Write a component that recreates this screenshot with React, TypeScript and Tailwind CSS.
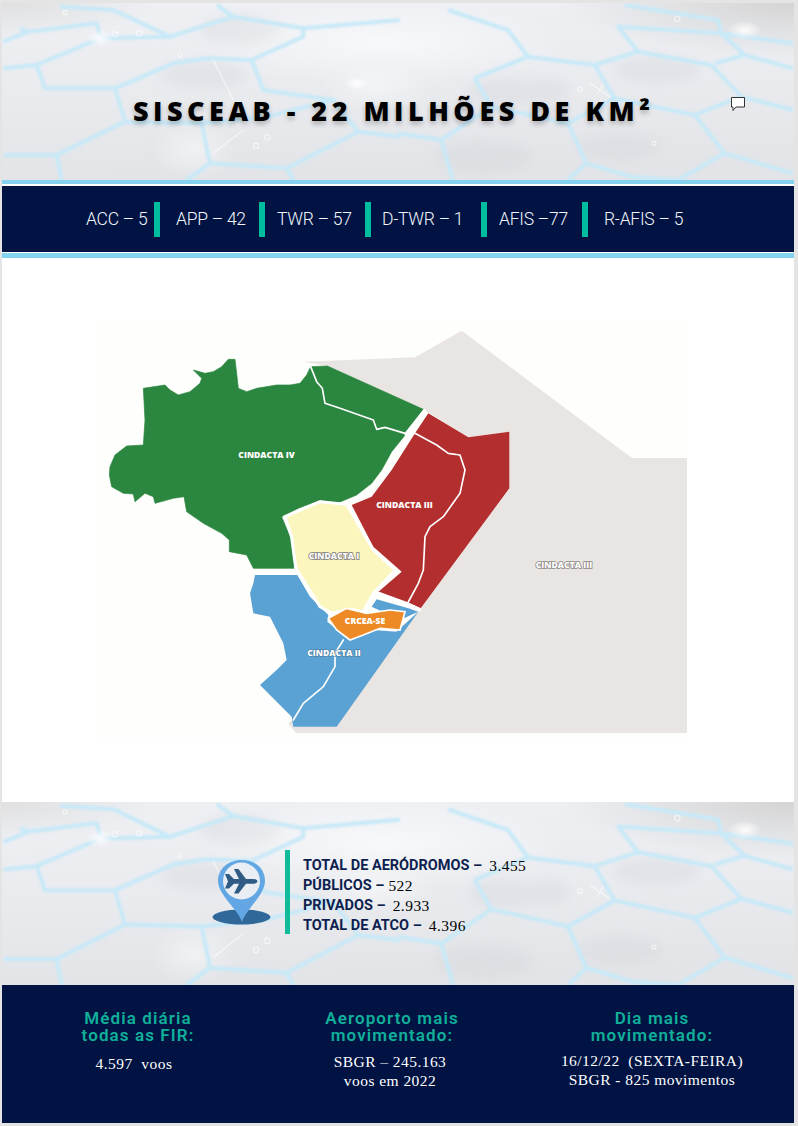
import React from "react";

const leftLines = [
  "10,125 85,95 290,70 300,110",
  "60,85 85,95",
  "10,205 110,195 135,265 345,265 375,365 170,465 10,465",
  "110,195 300,115 510,110 700,50 650,15",
  "170,465 185,540",
  "345,265 520,190 620,175 755,180 790,270 1000,300 1050,365 1075,395 860,505 880,540",
  "755,180 910,110 910,85 700,50",
  "375,365 605,370 630,490 560,540",
  "605,370 800,350 1000,300",
  "630,490 860,505",
  "1075,395 1200,410",
  "180,20 340,30 510,110",
  "910,85 1200,60",
];
const rightLines = [
  "230,235 280,320 130,420 0,400",
  "130,420 165,540",
  "280,320 510,370 565,490 510,540",
  "565,490 700,530 840,540",
  "510,370 650,295 590,195 390,170 230,235",
  "590,195 720,155 940,195 1030,290 890,345 980,460 840,540",
  "980,460 1185,520",
  "890,345 650,295",
  "1030,290 1185,330",
  "950,190 1040,165 1185,205",
  "1040,165 970,100 1185,130",
  "720,155 660,80 970,100",
  "680,15 960,60 970,100",
  "390,170 330,90 150,30",
];

function Backdrop() {
  return (
    <svg className="absolute inset-0 w-full h-full" viewBox="6 9 2376 531" preserveAspectRatio="none">
      <defs>
        <linearGradient id="bgg" x1="0" y1="0" x2="0.1" y2="1">
          <stop offset="0" stopColor="#eef0f4" />
          <stop offset="0.5" stopColor="#e9ebef" />
          <stop offset="1" stopColor="#e2e4e7" />
        </linearGradient>
        <radialGradient id="corner" cx="1" cy="0" r="0.3">
          <stop offset="0" stopColor="#d4d4d4" stopOpacity="1" />
          <stop offset="1" stopColor="#d4d4d4" stopOpacity="0" />
        </radialGradient>
        <radialGradient id="cornerL" cx="0" cy="0" r="0.2">
          <stop offset="0" stopColor="#dedede" stopOpacity="0.9" />
          <stop offset="1" stopColor="#dedede" stopOpacity="0" />
        </radialGradient>
        <radialGradient id="glow" cx="0.5" cy="0.5" r="0.5">
          <stop offset="0" stopColor="#ffffff" stopOpacity="0.9" />
          <stop offset="1" stopColor="#ffffff" stopOpacity="0" />
        </radialGradient>
        <filter id="b1"><feGaussianBlur stdDeviation="2.5" /></filter>
        <filter id="b2"><feGaussianBlur stdDeviation="16" /></filter>
      </defs>
      <rect x="6" y="9" width="2376" height="531" fill="url(#bgg)" />
      <rect x="6" y="9" width="2376" height="531" fill="url(#corner)" />
      <rect x="6" y="9" width="2376" height="531" fill="url(#cornerL)" />
      <g fill="#d4d7db" opacity="0.4" filter="url(#b2)">
        <ellipse cx="610" cy="225" rx="130" ry="40" />
        <ellipse cx="720" cy="90" rx="120" ry="45" />
        <ellipse cx="1510" cy="275" rx="110" ry="40" />
        <ellipse cx="1640" cy="270" rx="70" ry="35" />
        <ellipse cx="1970" cy="210" rx="130" ry="40" />
        <ellipse cx="1860" cy="440" rx="130" ry="40" />
        <ellipse cx="1450" cy="470" rx="150" ry="50" />
      </g>
      <ellipse cx="1150" cy="130" rx="560" ry="130" fill="url(#glow)" opacity="0.7" />
      <ellipse cx="580" cy="450" rx="130" ry="90" fill="url(#glow)" opacity="0.5" />
      <ellipse cx="1130" cy="260" rx="170" ry="70" fill="url(#glow)" opacity="0.5" />
      <g fill="none" stroke="#c8e9f8" strokeWidth="12" strokeLinejoin="round" filter="url(#b1)">
        {leftLines.map((p, i) => (
          <polyline key={i} points={p} />
        ))}
        <g transform="translate(1194 0)">
          {rightLines.map((p, i) => (
            <polyline key={i} points={p} />
          ))}
        </g>
      </g>
      <ellipse cx="300" cy="115" rx="40" ry="26" fill="url(#glow)" />
      <ellipse cx="2235" cy="90" rx="50" ry="28" fill="url(#glow)" />
      <ellipse cx="1070" cy="250" rx="36" ry="20" fill="url(#glow)" />
      <g fill="none" stroke="#ffffff" strokeWidth="3.5" opacity="0.6">
        <circle cx="195" cy="38" r="6" />
        <circle cx="345" cy="103" r="8" />
        <circle cx="418" cy="100" r="8" />
        <circle cx="540" cy="165" r="6" />
        <circle cx="802" cy="412" r="8" />
        <circle cx="768" cy="438" r="8" />
        <circle cx="2032" cy="56" r="8" />
        <circle cx="1740" cy="268" r="7" />
        <circle cx="1962" cy="430" r="6" />
        <path d="M640 180 L700 300 M640 460 L730 390 M1770 250 L1830 290 M1810 255 L1790 285" />
      </g>
    </svg>
  );
}

function MapSvg() {
  return (
    <svg width="600" height="420" viewBox="90 320 600 420" className="block">
      <rect x="96" y="322" width="592" height="416" fill="#fefefc" />
      <g transform="translate(90 320) scale(0.33333)">
        <path
          d="M642,125 L975,112 L1115,32 L1626,414 L1791,414 L1791,1239 L618,1239 L595,1210 L985,875 L1258,505 L1258,335 L1135,352 L1000,268 L712,138 Z"
          fill="#e9e5e2"
        />
        <path
          d="M662,140 L712,138 L1000,268 L975,305 L948,342 L905,395 L875,450 L845,490 L800,525 L745,548 L690,540 L625,565 L575,590 L600,650 L612,745 L490,745 L470,705 L418,695 L418,660 L395,640 L340,610 L290,575 L282,530 L250,535 L195,550 L190,530 L165,520 L135,545 L130,522 L100,520 L65,500 L58,465 L60,440 L75,405 L110,378 L160,375 L165,300 L160,205 L225,195 L240,210 L265,225 L300,215 L330,190 L335,175 L310,150 L345,160 L370,155 L395,140 L415,118 L435,118 L440,160 L445,205 L470,215 L500,205 L560,195 L600,195 L630,190 L650,165 Z"
          fill="#2b8740"
          stroke="#2b8740"
          strokeWidth="2"
          strokeLinejoin="round"
        />
        <path
          d="M1015,280 L1135,352 L1258,335 L1258,505 L990,868 L950,850 L862,818 L935,755 L850,680 L785,555 L845,530 L905,450 L975,340 Z"
          fill="#b32f2f"
        />
        <path
          d="M495,765 L622,765 L660,830 L715,885 L712,905 L780,960 L850,930 L920,935 L985,875 L740,1220 L610,1220 L605,1190 L510,1095 L560,1050 L590,1020 L580,970 L560,930 L540,890 L490,880 L485,850 L480,820 L490,790 Z"
          fill="#5aa2d3"
        />
        <path d="M845,860 L860,838 L955,865 L985,875 L930,900 Z" fill="#5aa2d3" />
        <path
          d="M585,590 L690,545 L770,553 L850,690 L915,750 L850,820 L820,875 L780,868 L725,880 L690,860 L640,780 L618,745 L605,650 Z"
          fill="#faf6bd"
          stroke="#ffffff"
          strokeWidth="9"
        />
        <path
          d="M715,895 L770,865 L830,880 L900,870 L945,875 L930,930 L870,925 L820,945 L780,960 L740,930 Z"
          fill="#ee8a26"
          stroke="#ffffff"
          strokeWidth="5"
        />
        <g fill="none" stroke="#ffffff" strokeLinejoin="round" strokeLinecap="round">
          <path d="M948,342 L1003,272" strokeWidth="10" />
          <path d="M862,818 L950,850 L990,868" strokeWidth="9" />
          <path d="M662,140 L680,185 L697,205 L705,250 L750,265 L850,300 L860,328 L885,322 L945,340 L975,340 L1040,375 L1075,400 L1110,405 L1125,450 L1110,520 L1060,590 L1020,620 L1005,650 L1000,750 L985,790 L950,855" strokeWidth="5" />
          <path d="M610,1200 L640,1150 L700,1100 L735,1040 L735,1000 L760,960" strokeWidth="5" />
        </g>
      </g>
      <g fontFamily="'Open Sans', sans-serif" fontWeight="800" fontSize="8.6" textAnchor="middle">
        <text x="266.5" y="458" fill="#fff">CINDACTA IV</text>
        <text x="404.5" y="507.5" fill="#fff">CINDACTA III</text>
        <text x="334" y="559" fill="#fff" stroke="#777" strokeWidth="1.6" paintOrder="stroke">CINDACTA I</text>
        <text x="365" y="624" fill="#fff">CRCEA-SE</text>
        <text x="334" y="656" fill="#fff" stroke="#47708f" strokeWidth="1" paintOrder="stroke">CINDACTA II</text>
        <text x="564" y="568" fill="#fff" stroke="#8a8584" strokeWidth="1.6" paintOrder="stroke">CINDACTA III</text>
      </g>
    </svg>
  );
}

function Pin() {
  return (
    <svg width="60" height="66" viewBox="0 0 60 66" className="block">
      <ellipse cx="29.5" cy="58" rx="29" ry="7.5" fill="#31689a" />
      <path d="M30 63 C26 50 6 36 6 22 C6 9 17 1 30 1 C43 1 53 9 53 22 C53 36 34 50 30 63 Z" fill="#62a7e3" />
      <circle cx="29.5" cy="22" r="18.5" fill="#e8eef3" />
      <path
        d="M13 15 L17 15 L22 20 L27 20 L22 10 L26.5 10 L34 20 L41 20 C44 20 45.5 21.3 45.5 22.3 C45.5 23.6 44 24.7 41 24.7 L34 24.7 L26.5 34.5 L22 34.5 L27 24.7 L22 24.7 L17 29.5 L13 29.5 L16 22.3 Z"
        fill="#2f5b84"
      />
    </svg>
  );
}

const bandItems = [
  { t: "ACC – 5", c: "w-[74px] mr-[16px]" },
  { t: "APP – 42", c: "w-[89px] mr-[12px]" },
  { t: "TWR – 57", c: "w-[94px] mr-[11px]" },
  { t: "D-TWR – 1", c: "w-[105px] mr-[12px]" },
  { t: "AFIS –77", c: "w-[89px] mr-[16px]" },
];

const stats = [
  { k: "TOTAL DE AERÓDROMOS –", v: "3.455", g: "ml-[7px]" },
  { k: "PÚBLICOS –", v: "522", g: "ml-[4px]" },
  { k: "PRIVADOS –", v: "2.933", g: "ml-[7px]" },
  { k: "TOTAL DE ATCO –", v: "4.396", g: "ml-[7px]" },
];

const heading = "font-['Roboto',sans-serif] font-semibold text-[17px] leading-[17px] tracking-[1.1px] text-[#10b09a] text-center";
const value = "font-['Liberation_Serif',serif] text-[15.5px] tracking-[0.45px] text-white text-center";

export default function App() {
  return (
    <div className="relative w-[798px] h-[1126px] bg-[#e4e4e4] pt-[3px] pl-[2px] pr-[4px] pb-[3px] overflow-hidden">
      <div className="h-full bg-white flex flex-col">
        <header className="relative h-[177px] flex items-center overflow-hidden">
          <Backdrop />
          <h1 className="relative pl-[131px] pt-[38px] font-['Open_Sans',sans-serif] font-extrabold text-[27px] leading-none tracking-[4.5px] text-black whitespace-nowrap [text-shadow:0_3px_5px_rgba(0,0,0,0.25)]">
            SISCEAB - 22 MILHÕES DE KM²
          </h1>
        </header>
        <div className="h-[4px] bg-[#84d2ee]" />
        <div className="h-[2px] bg-white" />
        <div className="h-[66px] bg-[#001343] flex items-center pl-[84px] text-[#f2f5fa] font-['Roboto',sans-serif] font-light text-[17.5px] tracking-[-0.25px] whitespace-nowrap">
          {bandItems.map((b) => (
            <div key={b.t} className={`${b.c} flex items-center justify-between shrink-0`}>
              <span>{b.t}</span>
              <span className="w-[6px] h-[35px] bg-[#00bda0]" />
            </div>
          ))}
          <span>R-AFIS – 5</span>
        </div>
        <div className="h-[1px] bg-white" />
        <div className="h-[5px] bg-[#84d2ee]" />
        <main className="h-[544px] pt-[62px] pl-[88px]">
          <MapSvg />
        </main>
        <section className="relative h-[183px] overflow-hidden flex items-center pl-[210px] pb-[3px]">
          <Backdrop />
          <div className="relative flex items-center">
            <Pin />
            <div className="w-[5px] h-[84px] bg-[#0fbb98] ml-[13px] mr-[13px]" />
            <div className="flex flex-col pt-[7px]">
              {stats.map((s) => (
                <div key={s.k} className="h-[20px] flex items-center whitespace-nowrap">
                  <span className="font-['Roboto',sans-serif] font-bold text-[14.5px] text-[#0e1f4f]">{s.k}</span>
                  <span className={`${s.g} font-['Liberation_Serif',serif] text-[15.5px] tracking-[0.45px] text-black`}>{s.v}</span>
                </div>
              ))}
            </div>
          </div>
        </section>
        <footer className="flex-1 bg-[#001343] flex pt-[25px]">
          <div className="w-[272px] shrink-0">
            <h2 className={heading}>Média diária<br />todas as FIR:</h2>
            <p className={`${value} mt-[8px] pr-[8px]`}>4.597&nbsp; voos</p>
          </div>
          <div className="w-[236px] shrink-0">
            <h2 className={heading}>Aeroporto mais<br />movimentado:</h2>
            <p className={`${value} mt-[8px] leading-[19px] pr-[4px]`}>SBGR – 245.163<br />voos em 2022</p>
          </div>
          <div className="flex-1">
            <h2 className={heading}>Dia mais<br />movimentado:</h2>
            <p className={`${value} mt-[7px] leading-[19px]`}>16/12/22&nbsp; (SEXTA-FEIRA)<br />SBGR - 825 movimentos</p>
          </div>
        </footer>
      </div>
      <svg className="absolute left-[730px] top-[96px]" width="16" height="16" viewBox="0 0 16 16">
        <path d="M1.5 1.5 H14.5 V11 H6 L3 14.5 V11 H1.5 Z" fill="#fff" stroke="#333" strokeWidth="1" />
      </svg>
    </div>
  );
}
